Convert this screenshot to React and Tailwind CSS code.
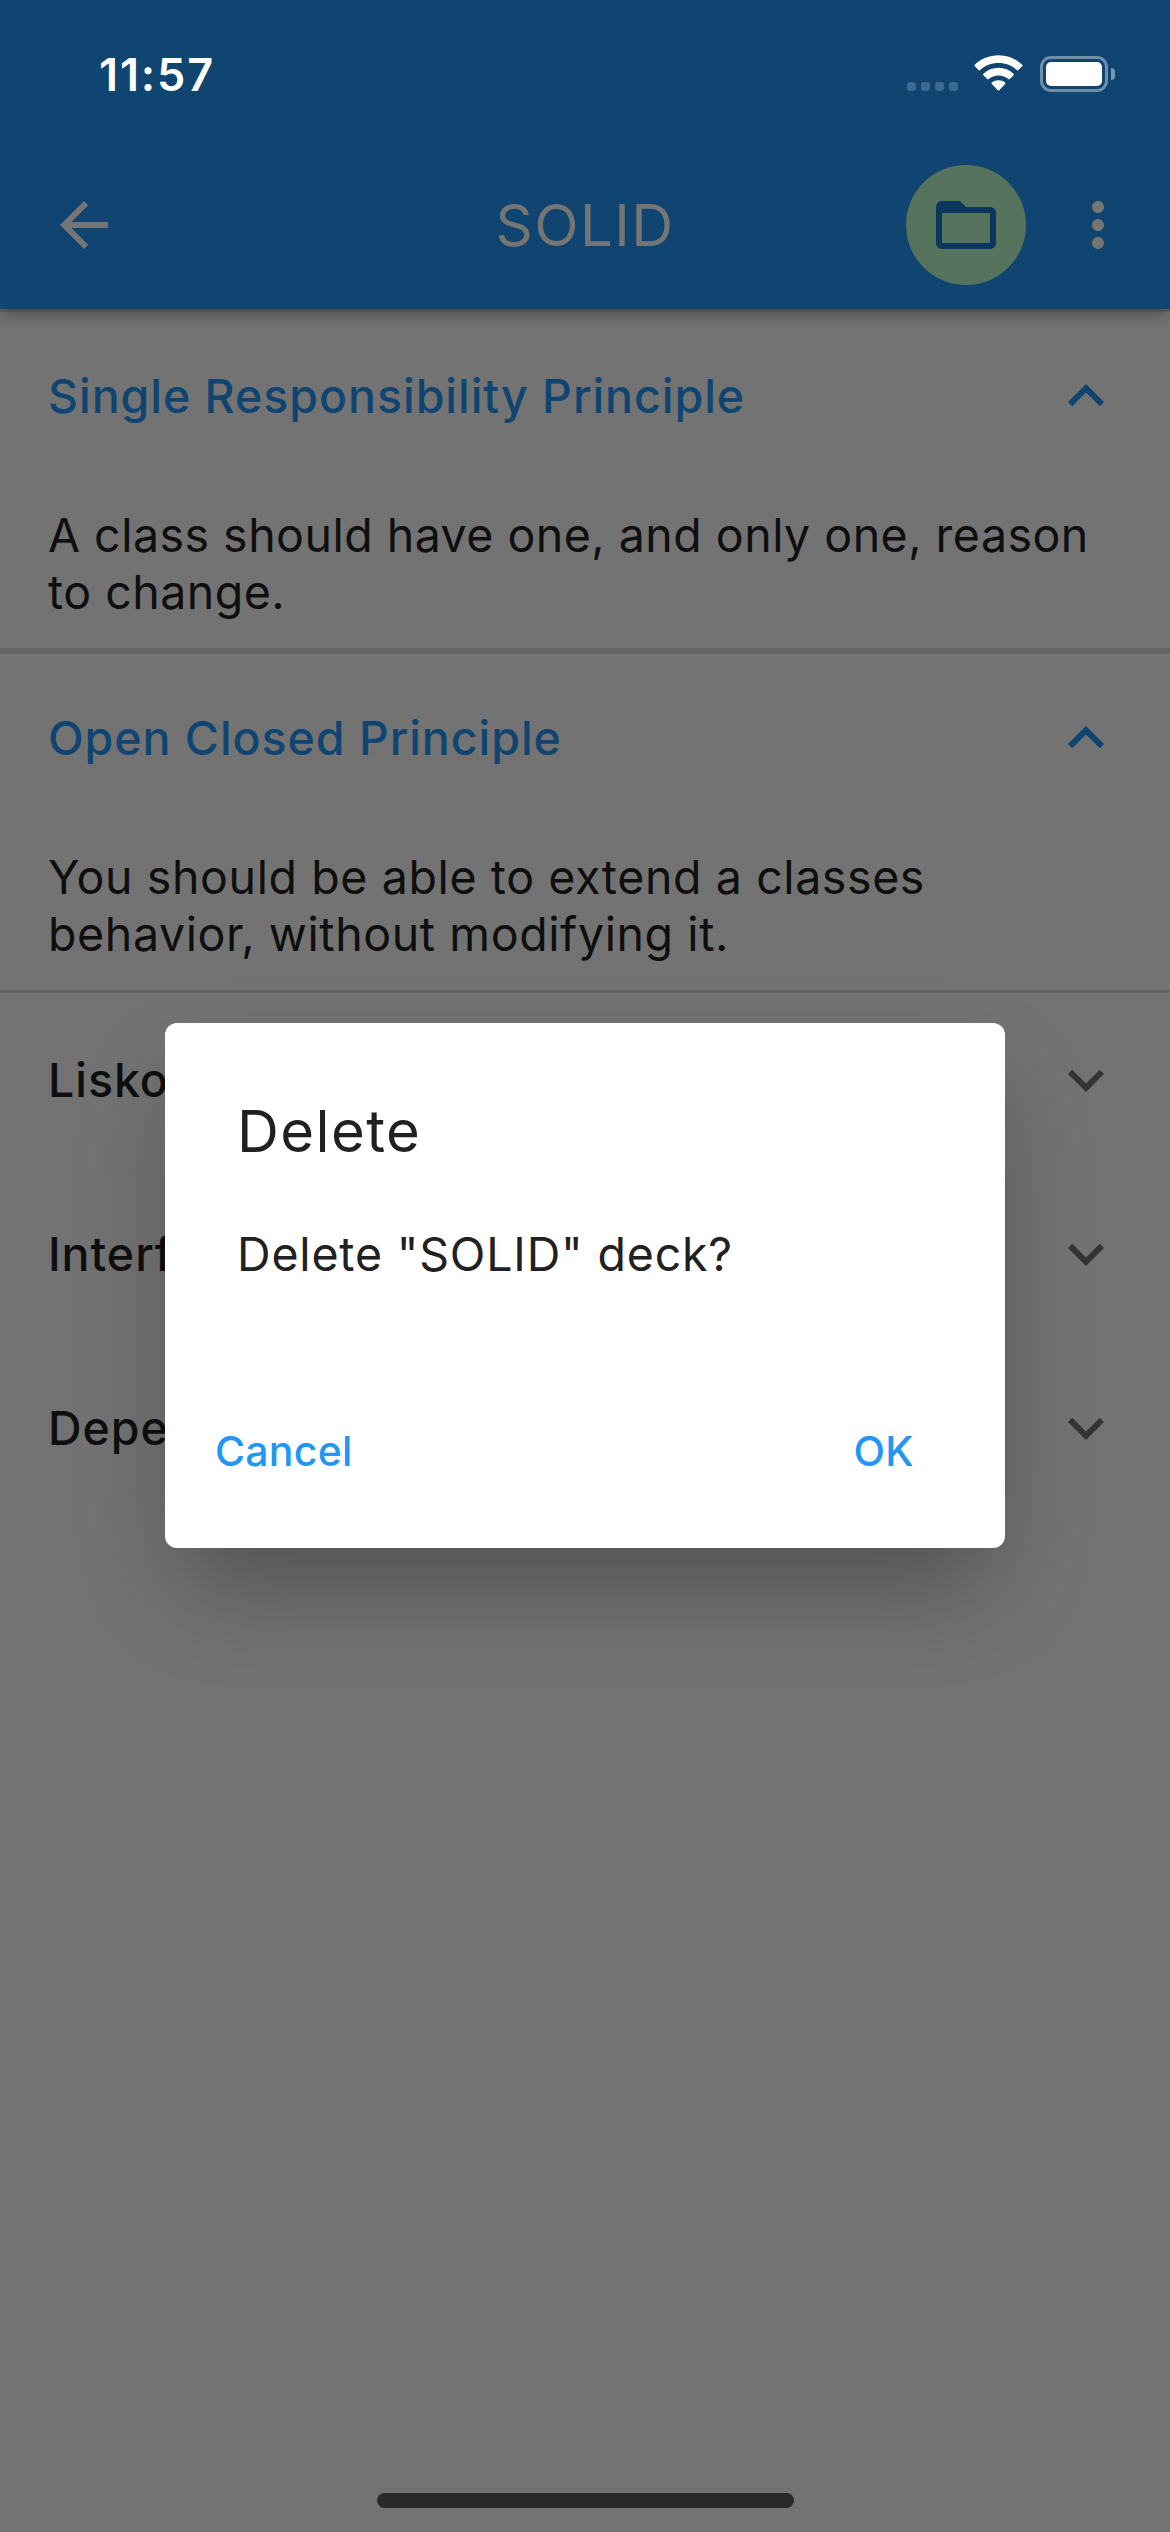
import React from "react";

const sections = [
  {
    title: "Single Responsibility Principle",
    body: "A class should have one, and only one, reason to change.",
    bodyClass: "tracking-[0.48px]",
    borderClass: "border-y-3",
  },
  {
    title: "Open Closed Principle",
    body: "You should be able to extend a classes behavior, without modifying it.",
    bodyClass: "tracking-[0.6px]",
    borderClass: "border-y-3",
  },
  { title: "Lisko" },
  { title: "Interf" },
  { title: "Depe" },
];

function MaterialIcon({ d, className }) {
  return (
    <svg viewBox="0 0 24 24" fill="currentColor" className={`size-[72px] shrink-0 ${className ?? ""}`}>
      <path d={d} />
    </svg>
  );
}

function StatusBar() {
  return (
    <div className="flex h-[141px] justify-between pl-[99px] pr-[55px] text-white">
      <div className="mt-[48px] h-[54px] text-[45px] font-semibold leading-[54px] tracking-[1.9px]">11:57</div>
      <div className="mt-[55px] flex h-[37px]">
        <div className="mt-[27px] flex gap-[5px]">
          {[0, 1, 2, 3].map((i) => (
            <div key={i} className="size-[9px] rounded-[3px] bg-[#3f6a8d]" />
          ))}
        </div>
        <svg viewBox="0 0 49 36" fill="currentColor" className="ml-[16px] h-[36px] w-[49px]">
          <path d="M24.5 0.3C33.7 0.3 42 3.8 48.2 9.7Q49 10.5 48.2 11.3L44.4 15.1Q43.7 15.8 42.9 15.1C38 10.5 31.6 8 24.5 8S11 10.5 6.1 15.1Q5.3 15.8 4.6 15.1L0.8 11.3Q0 10.5 0.8 9.7C7 3.8 15.3 0.3 24.5 0.3Z" />
          <path d="M24.5 12.8C30.3 12.8 35.6 15 39.6 18.7Q40.4 19.5 39.6 20.3L35.8 24.1Q35.1 24.7 34.3 24.1C31.6 21.7 28.2 20.4 24.5 20.4S17.4 21.7 14.7 24.1Q13.9 24.7 13.2 24.1L9.4 20.3Q8.6 19.5 9.4 18.7C13.4 15 18.7 12.8 24.5 12.8Z" />
          <path d="M24.5 25.2C27 25.2 29.3 26 31.1 27.5Q32 28.3 31.2 29.1L25.2 35.3Q24.5 36 23.8 35.3L17.8 29.1Q17 28.3 17.9 27.5C19.7 26 22 25.2 24.5 25.2Z" />
        </svg>
        <div className="ml-[17px] mt-px flex h-[36px] w-[68px] rounded-[11px] border-3 border-[#6f8fa9] p-[3px]">
          <div className="flex-1 rounded-[5px] bg-white" />
        </div>
        <div className="ml-[3px] mt-[13px] h-[12px] w-[4px] rounded-r-full bg-[#7b98b0]" />
      </div>
    </div>
  );
}

function AppBar() {
  return (
    <header className="relative z-10 bg-[#0f4570] shadow-[0_8px_14px_-2px_rgba(0,0,0,0.3)]">
      <StatusBar />
      <div className="flex h-[168px] items-center justify-between pl-12 pr-9 text-[#757575]">
        <div className="flex w-[270px]">
          <MaterialIcon d="M20 11H7.83l5.59-5.59L12 4l-8 8 8 8 1.41-1.41L7.83 13H20v-2z" />
        </div>
        <h1 className="text-[58px] leading-[72px] tracking-[1.45px]">SOLID</h1>
        <div className="flex w-[282px] items-center justify-end gap-[36px]">
          <div className="flex size-[120px] items-center justify-center rounded-full bg-[#56735e] text-[#0b365e]">
            <MaterialIcon d="M20 6h-8l-2-2H4c-1.1 0-1.99.9-1.99 2L2 18c0 1.1.9 2 2 2h16c1.1 0 2-.9 2-2V8c0-1.1-.9-2-2-2zm0 12H4V8h16v10z" />
          </div>
          <MaterialIcon d="M12 8c1.1 0 2-.9 2-2s-.9-2-2-2-2 .9-2 2 .9 2 2 2zm0 2c-1.1 0-2 .9-2 2s.9 2 2 2 2-.9 2-2-.9-2-2-2zm0 6c-1.1 0-2 .9-2 2s.9 2 2 2 2-.9 2-2-.9-2-2-2z" />
        </div>
      </div>
    </header>
  );
}

function Section({ title, body, bodyClass, borderClass }) {
  const open = Boolean(body);
  return (
    <section className={open ? `h-[342px] border-[#656565] ${borderClass}` : "h-[174px]"}>
      <div className={`flex h-[174px] items-center justify-between px-12 ${open ? "-mt-[3px] text-[#0f4570]" : "text-[#0f0f0f]"}`}>
        <h2 className={`text-[46.5px] font-medium leading-[57px] tracking-[0.95px] ${open ? "" : "w-[117px] overflow-hidden"}`}>
          {title}
        </h2>
        <MaterialIcon
          d="M16.59 8.59L12 13.17 7.41 8.59 6 10l6 6 6-6z"
          className={open ? "rotate-180" : "text-[#353535]"}
        />
      </div>
      {open && (
        <p className={`w-[1100px] pl-12 pt-6 text-[46.5px] leading-[57px] text-[#0f0f0f] ${bodyClass}`}>{body}</p>
      )}
    </section>
  );
}

function DeleteDialog() {
  return (
    <div className="absolute inset-0 z-20 flex items-center justify-center pb-[102px] pt-[141px]">
      <div className="h-[525px] w-[840px] rounded-xl bg-white pt-[72px] text-[#212121] shadow-[0_48px_96px_-16px_rgba(0,0,0,0.31)]">
        <h2 className="px-[72px] text-[58px] leading-[72px] tracking-[1.4px]">Delete</h2>
        <p className="mt-[59px] px-[72px] text-[46.5px] leading-[57px] tracking-[0.82px]">Delete "SOLID" deck?</p>
        <div className="mt-[96px] flex h-[144px] items-center justify-between pl-[50px] pr-[91px] text-[41px] font-medium leading-[50px] text-[#2196f3]">
          <button className="tracking-[0.24px]">Cancel</button>
          <button className="tracking-[0.5px]">OK</button>
        </div>
      </div>
    </div>
  );
}

export default function App() {
  return (
    <div className="relative flex h-[2532px] w-[1170px] flex-col overflow-hidden bg-[#737373] font-['Inter',sans-serif]">
      <AppBar />
      <main className="flex-1">
        {sections.map((s) => (
          <Section key={s.title} {...s} />
        ))}
      </main>
      <DeleteDialog />
      <div className="mb-6 ml-[377px] h-[15px] w-[417px] rounded-full bg-[#292929]" />
    </div>
  );
}
